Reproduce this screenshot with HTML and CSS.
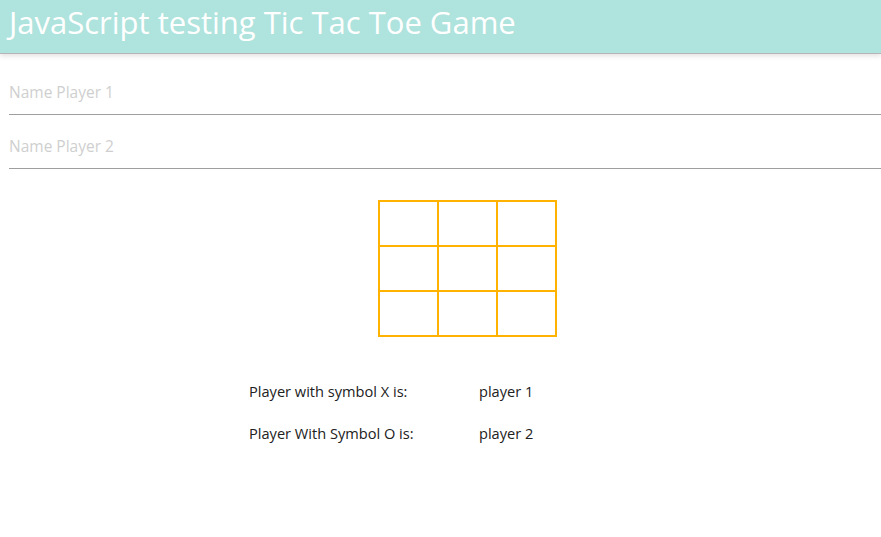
FILE: index.html
```html
<!DOCTYPE html>
<html>
<head>
<meta charset="utf-8">
<link rel="stylesheet" href="styles.css">
</head>
<body>
<header class="topbar">
  <h1 class="title">JavaScript testing Tic Tac Toe Game</h1>
</header>
<main class="content">
  <form class="names">
    <input class="name-input" type="text" placeholder="Name Player 1">
    <input class="name-input" type="text" placeholder="Name Player 2">
  </form>
  <div class="board-wrap">
    <div class="board">
      <div class="cell"></div><div class="cell"></div><div class="cell"></div>
      <div class="cell"></div><div class="cell"></div><div class="cell"></div>
      <div class="cell"></div><div class="cell"></div><div class="cell"></div>
    </div>
  </div>
  <div class="players">
    <div class="player-row"><span class="label">Player with symbol X is:</span><span class="value">player 1</span></div>
    <div class="player-row"><span class="label">Player With Symbol O is:</span><span class="value">player 2</span></div>
  </div>
</main>
</body>
</html>
```
FILE: styles.css
```css
* { box-sizing: border-box; }
html, body { margin: 0; padding: 0; background: #fff; }
body {
  font-family: "Open Sans", "Noto Sans", sans-serif;
  color: #212121;
  overflow: hidden;
}
.topbar {
  height: 54px;
  background: #afe3dd;
  border-bottom: 1px solid #b9b3b6;
  box-shadow: 0 2px 5px rgba(0,0,0,0.12);
  padding: 0 9px;
  display: flex;
  align-items: center;
}
.title {
  margin: 0;
  font-weight: 400;
  font-size: 31px;
  color: #fff;
  line-height: 1;
  padding-bottom: 8px;
  white-space: nowrap;
}
.content { padding: 0 0 0 9px; }
.names { display: flex; flex-direction: column; }
.name-input {
  display: block;
  width: 100%;
  border: none;
  border-bottom: 1px solid #9e9e9e;
  outline: none;
  font-family: inherit;
  font-size: 15.5px;
  padding: 0 0 4px 0;
  height: 42px;
  margin-top: 12px;
  background: transparent;
}
.name-input:first-child { margin-top: 19px; }
.name-input::placeholder { color: #cfcfcf; }
.board-wrap {
  display: flex;
  justify-content: flex-start;
  margin-top: 31px;
  padding-left: 369px;
}
.board {
  display: grid;
  grid-template-columns: repeat(3, 57px);
  grid-template-rows: repeat(3, 43px);
  gap: 2px;
  padding: 2px;
  background: #ffb300;
}
.cell { background: #fff; }
.players {
  margin-top: 33px;
  padding-left: 240px;
  font-size: 14.6px;
}
.player-row {
  display: flex;
  height: 42px;
  align-items: center;
}
.label { width: 230px; }
```
